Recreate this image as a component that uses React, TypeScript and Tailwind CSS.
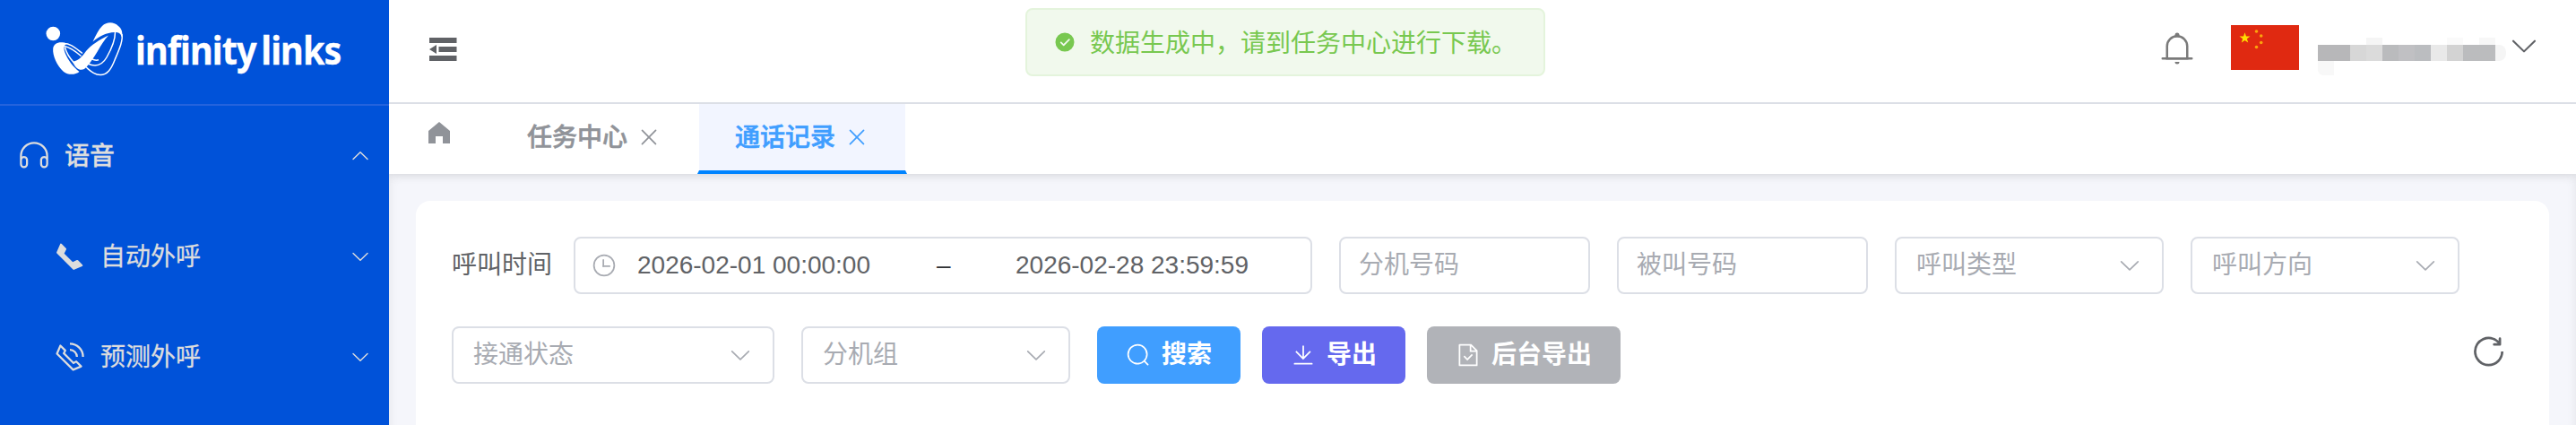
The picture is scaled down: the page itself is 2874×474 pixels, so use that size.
import React from "react";

const ICONS = {
  headset: ["M896 529.152V512a384 384 0 1 0-768 0v17.152A128 128 0 0 1 320 640v128a128 128 0 1 1-256 0V512a448 448 0 1 1 896 0v256a128 128 0 1 1-256 0V640a128 128 0 0 1 192-110.848zM896 640a64 64 0 0 0-128 0v128a64 64 0 0 0 128 0V640zm-768 0v128a64 64 0 0 0 128 0V640a64 64 0 1 0-128 0z"],
  arrowDown: ["M831.872 340.864 512 652.672 192.128 340.864a30.592 30.592 0 0 0-42.752 0 29.12 29.12 0 0 0 0 41.6L489.664 714.24a32 32 0 0 0 44.672 0l340.288-331.712a29.12 29.12 0 0 0 0-41.728 30.592 30.592 0 0 0-42.752 0z"],
  phoneFilled: ["M199.232 125.568 90.624 379.008a32 32 0 0 0 6.784 35.2l512.384 512.384a32 32 0 0 0 35.2 6.784l253.44-108.608a32 32 0 0 0 10.048-52.032L769.6 633.92a32 32 0 0 0-36.928-5.952l-130.176 65.088-271.488-271.552 65.024-130.176a32 32 0 0 0-5.952-36.928L251.2 115.52a32 32 0 0 0-51.968 10.048z"],
  phone: ["M79.36 432.256 591.744 944.64a32 32 0 0 0 35.2 6.784l253.44-108.544a32 32 0 0 0 9.984-52.032l-153.856-153.92a32 32 0 0 0-36.928-6.016l-69.888 34.944L358.08 394.24l35.008-69.888a32 32 0 0 0-5.952-36.928L233.152 133.568a32 32 0 0 0-52.032 10.048L72.512 397.056a32 32 0 0 0 6.784 35.2zm60.48-29.952 81.536-190.08L325.568 316.48l-24.64 49.216-20.608 41.216 32.576 32.64 271.552 271.552 32.64 32.64 41.216-20.672 49.28-24.576 104.192 104.128-190.08 81.472L139.84 402.304zM512 320v-64a256 256 0 0 1 256 256h-64a192 192 0 0 0-192-192zm0-192V64a448 448 0 0 1 448 448h-64a384 384 0 0 0-384-384z"],
  home: ["M512 128 128 447.936V896h255.936V640H640v256h255.936V447.936z"],
  close: ["M764.288 214.592 512 466.88 259.712 214.592a31.936 31.936 0 0 0-45.12 45.12L466.752 512 214.528 764.224a31.936 31.936 0 1 0 45.12 45.184L512 557.184l252.288 252.288a31.936 31.936 0 0 0 45.12-45.12L557.12 512.064l252.288-252.352a31.936 31.936 0 1 0-45.12-45.184z"],
  bell: [
    "M512 64a64 64 0 0 1 64 64v64H448v-64a64 64 0 0 1 64-64z",
    "M256 768h512V448a256 256 0 1 0-512 0v320zm256-640a320 320 0 0 1 320 320v384H192V448a320 320 0 0 1 320-320z",
    "M96 768h832q32 0 32 32t-32 32H96q-32 0-32-32t32-32zm352 128h128a64 64 0 0 1-128 0z",
  ],
  success: ["M512 64a448 448 0 1 1 0 896 448 448 0 0 1 0-896zm-55.808 536.384-99.52-99.584a38.4 38.4 0 1 0-54.336 54.336l126.72 126.72a38.272 38.272 0 0 0 54.336 0l262.4-262.464a38.4 38.4 0 1 0-54.272-54.336L456.192 600.384z"],
  clock: [
    "M512 896a384 384 0 1 0 0-768 384 384 0 0 0 0 768zm0 64a448 448 0 1 1 0-896 448 448 0 0 1 0 896z",
    "M480 256a32 32 0 0 1 32 32v256a32 32 0 0 1-64 0V288a32 32 0 0 1 32-32z",
    "M480 512h256q32 0 32 32t-32 32H480q-32 0-32-32t32-32z",
  ],
  search: ["m795.904 750.72 124.992 124.928a32 32 0 0 1-45.248 45.248L750.656 795.904a416 416 0 1 1 45.248-45.248zM480 832a352 352 0 1 0 0-704 352 352 0 0 0 0 704z"],
  download: ["M160 832h704a32 32 0 1 1 0 64H160a32 32 0 1 1 0-64zm384-253.696 236.288-236.352 45.248 45.248L508.8 704 192 387.2l45.248-45.248L480 584.704V128h64v450.304z"],
  documentChecked: ["M805.504 320 640 154.496V320h165.504zM832 384H576V128H192v768h640V384zM160 64h480l256 256v608a32 32 0 0 1-32 32H160a32 32 0 0 1-32-32V96a32 32 0 0 1 32-32zm318.4 582.144 180.992-180.992L704.64 510.4 478.4 736.64 320 578.304l45.248-45.312L478.4 646.144z"],
  refresh: ["M784.512 230.272v-50.56a32 32 0 1 1 64 0v149.056a32 32 0 0 1-32 32H667.52a32 32 0 1 1 0-64h92.992A320 320 0 1 0 524.8 833.152a320 320 0 0 0 320-320h64a384 384 0 0 1-384 384 384 384 0 0 1-384-384 384 384 0 0 1 643.712-282.88z"],
};

function Icon({ name, className }: { name: keyof typeof ICONS; className: string }) {
  return (
    <svg viewBox="0 0 1024 1024" fill="currentColor" className={`shrink-0 ${className}`}>
      {ICONS[name].map((d) => (
        <path key={d} d={d} />
      ))}
    </svg>
  );
}

function Logo() {
  return (
    <div className="flex h-[118px] items-start border-b-2 border-[#2463dd] pl-[50px] pt-[22px]">
      <svg width="92" height="66" viewBox="50 22 92 66" className="shrink-0" fill="none">
        <circle cx="59.3" cy="37.5" r="7.8" fill="#fff" />
        <path d="M59.200 54C60 47.500 67 45.500 75 48.500C71 50 70.500 54 73 60C76 67 81 74 88.500 80C84.500 83.500 76 84 71 80C63.500 73.500 58.500 62 59.200 54Z" fill="#fff" />
        <path d="M71 48.500C79 48.500 84 53.500 92 59.500M71.500 51.500C78 52.500 84 57 90.500 62.500M72.500 53C74 59 78 65 82.500 70" stroke="#fff" strokeWidth="1.500" />
        <path d="M81 68.700C87 68 91 64 96 57C102 50 110 45 121 39.500C116 45 113 50 109 57C104 65 99 73 94 77C89 79.500 84 76 81 68.700Z" fill="#fff" />
        <path d="M103.500 46.500C107 39 110 33 114 29C119 24 127 24 132 29C136 32.500 137 35.500 136 42C135 37.500 132.500 35.500 127.500 36C119 36.500 111 40 103.500 46.500Z" fill="#fff" />
        <path
          d="M136 38C137.500 45 133 55 128 67C124 77 120 83.500 112 83.500C105 83.500 101 79 95.500 74.500M128.500 36C128.500 45 123 57 119 64C115 71 109 76 98 71M110 66.800C107.500 67.500 105 67.200 102 65.500"
          stroke="#fff"
          strokeWidth="1.5"
        />
      </svg>
      <div className="mt-[6px] h-[56px] w-[230px] pl-[9px]">
        <span className="inline-block origin-left scale-x-[0.92] whitespace-nowrap font-['Noto_Sans',sans-serif] text-[43px] font-bold leading-[56px] tracking-[-1px] text-white [word-spacing:-4px]">
          infinity links
        </span>
      </div>
    </div>
  );
}

function SubItem({ icon, label }: { icon: keyof typeof ICONS; label: string }) {
  return (
    <div className="flex h-28 items-center pl-[60px] pr-5">
      <Icon name={icon} className="size-9" />
      <span className="ml-4 flex-1 pt-[2px]">{label}</span>
      <Icon name="arrowDown" className="size-6" />
    </div>
  );
}

function Tab({ label, active = false }: { label: string; active?: boolean }) {
  return (
    <div
      className={`flex h-[78px] items-center gap-[10px] border-x-2 border-b-4 border-x-transparent bg-clip-padding pl-10 pr-10 font-medium ${
        active ? "-ml-[2px] border-b-[#0084ff] bg-[#f2f5ff] text-[#409eff]" : "border-b-transparent text-[#909399]"
      }`}
    >
      <span className="pt-[2px] [-webkit-text-stroke:0.6px_currentColor]">{label}</span>
      <Icon name="close" className="size-7" />
    </div>
  );
}

function TextField({ placeholder }: { placeholder: string }) {
  return (
    <div className="flex h-16 w-[280px] items-center rounded-lg border-2 border-[#dcdfe6] px-5 text-[#a8abb2]">{placeholder}</div>
  );
}

function Select({ placeholder, width }: { placeholder: string; width: string }) {
  return (
    <div className={`flex h-16 items-center justify-between rounded-lg border-2 border-[#dcdfe6] px-[22px] text-[#a8abb2] ${width}`}>
      <span>{placeholder}</span>
      <Icon name="arrowDown" className="size-7" />
    </div>
  );
}

function ActionButton({ icon, label, color }: { icon: keyof typeof ICONS; label: string; color: string }) {
  return (
    <button className={`flex h-16 items-center gap-3 rounded-lg px-8 font-semibold text-white ${color}`}>
      <Icon name={icon} className="size-7" />
      <span>{label}</span>
    </button>
  );
}

function Flag() {
  const star = "0,-6.300 1.500,-2 6,-1.950 2.400,0.800 3.700,5.100 0,2.500 -3.700,5.100 -2.400,0.800 -6,-1.950 -1.500,-2";
  return (
    <svg width="76" height="50" viewBox="0 0 76 50" className="shrink-0">
      <rect width="76" height="50" fill="#e02911" />
      <polygon points={star} transform="translate(15.500 14.500)" fill="#ffde00" />
      <g fill="#fba40d">
        <circle cx="28.5" cy="7" r="1.8" />
        <circle cx="33.7" cy="12" r="1.8" />
        <circle cx="33.7" cy="19.5" r="1.8" />
        <circle cx="28.5" cy="24.5" r="1.8" />
      </g>
    </svg>
  );
}

/* Account name, masked with coarse blocks */
function MaskedName() {
  return (
    <div className="grid w-[212px] grid-rows-[8px_18px_16px]">
      <div className="flex">
        <i className="ml-[54px] h-full w-[18px] bg-[#f5f5f5]" />
        <i className="ml-[72px] h-full w-[18px] bg-[#fafafa]" />
        <i className="ml-[18px] h-full w-[18px] bg-[#f7f7f7]" />
      </div>
      <div className="flex">
        <i className="w-9 bg-[#b7b7b9]" />
        <i className="w-[18px] bg-[#d7d7d7]" />
        <i className="w-[18px] bg-[#dbdbdb]" />
        <i className="w-[18px] bg-[#babbbd]" />
        <i className="w-[18px] bg-[#c0c0c3]" />
        <i className="w-[18px] bg-[#bbbdc0]" />
        <i className="w-[18px] bg-[#e9e9e9]" />
        <i className="w-[18px] bg-[#d3d3d3]" />
        <i className="w-9 bg-[#bbbcbe]" />
        <i className="w-3 rounded-r-lg bg-[#f5f5f5]" />
      </div>
      <div className="w-[18px] rounded-bl-md bg-[#f8f8f8]" />
    </div>
  );
}

export default function App() {
  return (
    <div className="relative flex h-[474px] w-[2874px] overflow-hidden bg-white font-['Liberation_Sans','Noto_Sans_CJK_SC',sans-serif] text-[28px] leading-[40px]">
      <aside className="z-20 w-[434px] shrink-0 bg-[#0052d9] text-[#dddddd] [-webkit-text-stroke:0.3px_currentColor]">
        <Logo />
        <div className="flex h-28 items-center pl-5 pr-5 font-medium">
          <Icon name="headset" className="size-9" />
          <span className="ml-4 flex-1 pt-[2px]">语音</span>
          <Icon name="arrowDown" className="size-6 rotate-180" />
        </div>
        <SubItem icon="phoneFilled" label="自动外呼" />
        <SubItem icon="phone" label="预测外呼" />
      </aside>

      <div className="flex min-w-0 flex-1 flex-col">
        <header className="z-20 flex h-[116px] shrink-0 items-start border-b-2 border-[#dcdfe6] bg-white pl-[45px] pr-10">
          <svg width="31" height="26" viewBox="0 0 31 26" className="mt-[42px]" fill="#606266">
            <path d="M0 0h30.500v6H0zM10.500 10h20v6h-20zM0 20h30.500v6H0zM8 8v10L0 13z" />
          </svg>
          <div className="ml-auto flex items-start">
            <Icon name="bell" className="mt-[34px] size-10 text-[#7a7a7a]" />
            <div className="ml-10 mt-7">
              <Flag />
            </div>
            <div className="ml-[21px] mt-[42px]">
              <MaskedName />
            </div>
            <Icon name="arrowDown" className="mt-[33px] size-9 text-[#606266]" />
          </div>
        </header>

        <nav className="z-10 flex h-[78px] shrink-0 bg-white pl-10 shadow-[0_0_12px_rgba(0,0,0,0.10)]">
          <Icon name="home" className="mr-10 mt-4 size-8 text-[#909399]" />
          <Tab label="任务中心" />
          <Tab label="通话记录" active />
        </nav>

        <main className="flex-1 bg-[#f5f6fb] px-[30px] pt-[30px] shadow-[inset_0_0_12px_rgba(0,0,0,0.08)]">
          <section className="flex h-[300px] flex-col gap-9 rounded-2xl bg-white px-10 pt-10">
            <div className="flex items-center">
              <span className="w-[136px] text-[#606266]">呼叫时间</span>
              <div className="mr-[30px] flex h-16 w-[824px] items-center rounded-lg border-2 border-[#dcdfe6] pl-[18px] text-[#606266]">
                <Icon name="clock" className="size-7 text-[#a8abb2]" />
                <span className="ml-[23px] w-[334px]">2026-02-01 00:00:00</span>
                <span className="w-[88px] text-[#303133]">–</span>
                <span>2026-02-28 23:59:59</span>
              </div>
              <div className="flex gap-[30px]">
                <TextField placeholder="分机号码" />
                <TextField placeholder="被叫号码" />
                <Select placeholder="呼叫类型" width="w-[300px]" />
                <Select placeholder="呼叫方向" width="w-[300px]" />
              </div>
            </div>
            <div className="flex items-center">
              <div className="mr-[30px] flex gap-[30px]">
                <Select placeholder="接通状态" width="w-[360px]" />
                <Select placeholder="分机组" width="w-[300px]" />
              </div>
              <div className="flex gap-6">
                <ActionButton icon="search" label="搜索" color="bg-[#409eff]" />
                <ActionButton icon="download" label="导出" color="bg-[#6569ee]" />
                <ActionButton icon="documentChecked" label="后台导出" color="bg-[#b1b3b8]" />
              </div>
              <Icon name="refresh" className="-mt-2 ml-auto mr-[6px] size-11 text-[#606266]" />
            </div>
          </section>
        </main>
      </div>

      <div className="absolute left-[1144px] top-[9px] z-30 flex h-[76px] w-[580px] items-center rounded-lg border-2 border-[#e4f4dc] bg-[#f1f9ed] pl-[30px] text-[#78c850]">
        <Icon name="success" className="size-6" />
        <span className="ml-4 whitespace-nowrap pt-[3px]">数据生成中，请到任务中心进行下载。</span>
      </div>
    </div>
  );
}
